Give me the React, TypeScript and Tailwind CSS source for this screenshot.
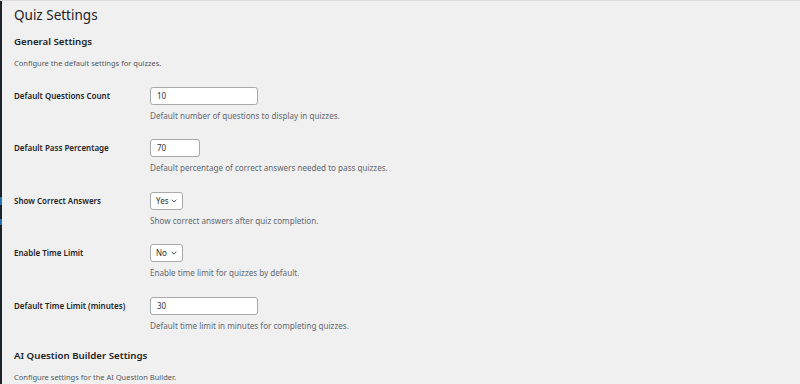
import React from "react";

const font = { fontFamily: '"Noto Sans", "Open Sans", sans-serif' };

function Chevron() {
  return (
    <svg width="6" height="4" viewBox="0 0 6 4" className="shrink-0">
      <path d="M0.6 0.7 L3 3.1 L5.4 0.7" fill="none" stroke="#2c3338" strokeWidth="0.9" />
    </svg>
  );
}

type Field =
  | { label: string; kind: "input"; value: string; width: string; desc: string }
  | { label: string; kind: "select"; value: string; desc: string };

const fields: Field[] = [
  { label: "Default Questions Count", kind: "input", value: "10", width: "w-[108px]", desc: "Default number of questions to display in quizzes." },
  { label: "Default Pass Percentage", kind: "input", value: "70", width: "w-[50px]", desc: "Default percentage of correct answers needed to pass quizzes." },
  { label: "Show Correct Answers", kind: "select", value: "Yes", desc: "Show correct answers after quiz completion." },
  { label: "Enable Time Limit", kind: "select", value: "No", desc: "Enable time limit for quizzes by default." },
  { label: "Default Time Limit (minutes)", kind: "input", value: "30", width: "w-[108px]", desc: "Default time limit in minutes for completing quizzes." },
];

export default function App() {
  return (
    <div className="w-[800px] h-[384px] overflow-hidden bg-[#f0f0f1] border-t border-[#dcdcde] flex" style={font}>
      <div className="w-[2px] shrink-0 bg-[#1d2327] flex flex-col">
        <div className="h-[196px]" />
        <div className="h-[8px] bg-[#2271b1]" />
        <div className="h-[14px]" />
        <div className="h-[6px] bg-[#2271b1]" />
      </div>
      <div className="flex flex-col pl-[12px] pt-[4px] text-[#1d2327]">
        <h1 className="text-[13.5px] leading-[20px] font-normal">Quiz Settings</h1>
        <h2 className="mt-[10px] text-[9.7px] leading-[14px] font-semibold">General Settings</h2>
        <p className="mt-[9px] text-[7.5px] leading-[11px] text-[#50575e]">Configure the default settings for quizzes.</p>
        <div className="mt-[8.5px] flex flex-col">
          {fields.map((f) => (
            <div key={f.label} className="flex py-[9px]">
              <div className="w-[136px] h-[18px] flex items-center text-[8px] font-semibold">{f.label}</div>
              <div className="flex flex-col">
                {f.kind === "input" ? (
                  <div className={`${f.width} h-[18px] bg-white border border-[#a7aaad] rounded-[3px] flex items-center pl-[6px] text-[8px] text-[#2c3338]`}>
                    {f.value}
                  </div>
                ) : (
                  <div className="w-[33px] h-[18px] bg-white border border-[#a7aaad] rounded-[3px] flex items-center pl-[5px] pr-[5px] justify-between text-[8px] text-[#2c3338]">
                    <span>{f.value}</span>
                    <Chevron />
                  </div>
                )}
                <p className="mt-[5px] text-[8.1px] leading-[11.5px] text-[#646970]">{f.desc}</p>
              </div>
            </div>
          ))}
        </div>
        <h2 className="mt-[8.5px] text-[9.7px] leading-[14px] font-semibold">AI Question Builder Settings</h2>
        <p className="mt-[9.5px] text-[7.5px] leading-[11px] text-[#50575e]">Configure settings for the AI Question Builder.</p>
      </div>
    </div>
  );
}
